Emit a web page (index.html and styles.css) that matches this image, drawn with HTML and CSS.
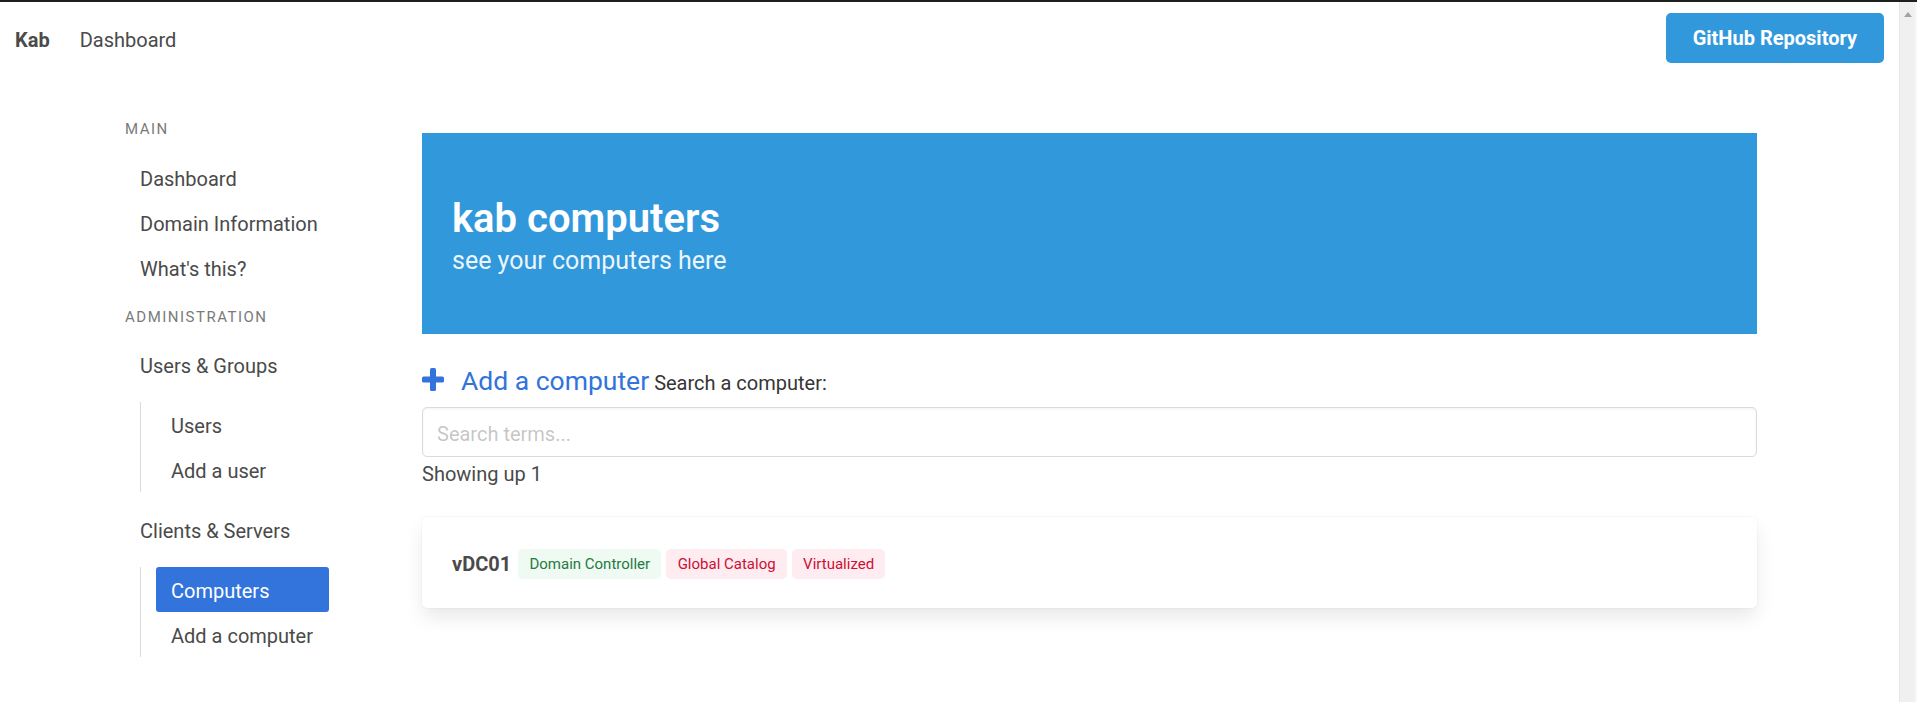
FILE: index.html
```html
<!DOCTYPE html>
<html lang="en">
<head>
<meta charset="utf-8">
<title>Kab - Computers</title>
<link rel="stylesheet" href="styles.css">
</head>
<body>
<div class="window">
  <div class="page">
    <nav class="navbar">
      <div class="navbar-start">
        <a class="navbar-item text-item brand">Kab</a>
        <a class="navbar-item text-item">Dashboard</a>
      </div>
      <div class="navbar-end">
        <div class="navbar-item"><a class="button">GitHub Repository</a></div>
      </div>
    </nav>
    <div class="layout">
      <aside class="menu">
        <p class="menu-label">Main</p>
        <ul class="menu-list">
          <li><a>Dashboard</a></li>
          <li><a>Domain Information</a></li>
          <li><a>What's this?</a></li>
        </ul>
        <p class="menu-label second">Administration</p>
        <ul class="menu-list">
          <li>
            <a>Users &amp; Groups</a>
            <ul class="sub-list">
              <li><a>Users</a></li>
              <li><a>Add a user</a></li>
            </ul>
          </li>
          <li>
            <a>Clients &amp; Servers</a>
            <ul class="sub-list">
              <li><a class="is-active">Computers</a></li>
              <li><a>Add a computer</a></li>
            </ul>
          </li>
        </ul>
      </aside>
      <main class="content">
        <section class="hero">
          <h1 class="title">kab computers</h1>
          <h2 class="subtitle">see your computers here</h2>
        </section>
        <div class="add-row">
          <a class="add-link"><svg class="plus" viewBox="0 0 22 23" width="22" height="23" aria-hidden="true"><rect x="8" y="0" width="6" height="23" rx="1.6" fill="#3273dc"/><rect x="0" y="8.5" width="22" height="6" rx="1.6" fill="#3273dc"/></svg>Add a computer</a>
          <label class="search-label">Search a computer:</label>
        </div>
        <input class="input" type="text" placeholder="Search terms...">
        <p class="showing">Showing up 1</p>
        <div class="card">
          <div class="card-content">
            <strong class="host">vDC01</strong>
            <span class="tag is-success">Domain Controller</span>
            <span class="tag is-danger">Global Catalog</span>
            <span class="tag is-danger">Virtualized</span>
          </div>
        </div>
      </main>
    </div>
  </div>
  <div class="scrollbar"><span class="arrow"></span></div>
</div>
</body>
</html>
```
FILE: styles.css
```css
* { box-sizing: border-box; }

html, body {
  margin: 0;
  padding: 0;
  overflow: hidden;
}

body {
  font-family: Roboto, "Segoe UI", "Liberation Sans", sans-serif;
  font-size: 20px;
  line-height: 1.5;
  color: #4a4a4a;
  background: #fff;
}

.window {
  display: flex;
  height: 100vh;
  border-top: 2px solid #1f1f1f;
}

.page {
  flex: 1;
  min-width: 0;
}

/* Navbar */
.navbar {
  display: flex;
  justify-content: space-between;
  height: 72px;
}

.navbar-start,
.navbar-end {
  display: flex;
}

.navbar-item {
  display: flex;
  align-items: center;
  padding: 10px 15px;
  line-height: 30px;
  color: #4a4a4a;
}

.navbar-item.text-item {
  padding-top: 12px;
  padding-bottom: 8px;
}

.brand {
  font-weight: 700;
}

.button {
  display: inline-flex;
  align-items: center;
  height: 50px;
  padding: 0 26px;
  border: 1px solid transparent;
  border-radius: 5px;
  background: #3298dc;
  color: #fff;
  font-weight: 700;
  font-size: 20px;
}

/* Layout */
.layout {
  display: grid;
  grid-template-columns: 219px 1335px;
  column-gap: 78px;
  padding-left: 125px;
}

/* Menu */
.menu {
  padding-top: 43px;
}

.menu-label {
  margin: 0 0 14px;
  padding-top: 1px;
  font-size: 15px;
  line-height: 22.5px;
  letter-spacing: 1.5px;
  text-transform: uppercase;
  color: #7a7a7a;
}

.menu-label.second {
  margin-top: 15px;
}

.menu-list,
.sub-list {
  list-style: none;
  margin: 0;
  padding: 0;
  line-height: 25px;
}

.menu-list a {
  display: block;
  padding: 12px 15px 8px;
  border-radius: 3px;
  color: #4a4a4a;
}

.sub-list {
  margin: 15px;
  padding-left: 15px;
  border-left: 1px solid #dbdbdb;
}

.menu-list a.is-active {
  background: #3273dc;
  color: #fff;
}

/* Content */
.content {
  padding-top: 59px;
}

.hero {
  background: #3298dc;
  padding: 63px 30px 57px;
  height: 201px;
}

.title {
  margin: 0;
  font-size: 40px;
  line-height: 45px;
  font-weight: 600;
  color: #fff;
}

.subtitle {
  margin: 4px 0 0;
  font-size: 25px;
  line-height: 31px;
  font-weight: 400;
  color: rgba(255, 255, 255, 0.92);
}

.add-row {
  margin-top: 24px;
  height: 45px;
  line-height: 45px;
  margin-bottom: 4px;
  white-space: nowrap;
}

.add-link {
  font-size: 26.5px;
  color: #3273dc;
}

.plus {
  vertical-align: -1px;
  margin-right: 17px;
}

.search-label {
  font-size: 20px;
  color: #363636;
}

.input {
  display: block;
  width: 100%;
  height: 50px;
  padding: 4px 14px 0;
  border: 1px solid #dbdbdb;
  border-radius: 5px;
  box-shadow: inset 0 1.25px 2.5px rgba(10, 10, 10, 0.05);
  font-family: inherit;
  font-size: 20px;
  color: #363636;
  background: #fff;
}

.input::placeholder {
  color: rgba(54, 54, 54, 0.3);
}

.showing {
  margin: 0;
  padding-top: 2px;
  line-height: 30px;
}

.card {
  margin-top: 28px;
  background: #fff;
  border-radius: 5px;
  box-shadow: 0 10px 20px -2.5px rgba(10, 10, 10, 0.1), 0 0 0 1px rgba(10, 10, 10, 0.02);
}

.card-content {
  display: flex;
  align-items: center;
  gap: 5px;
  height: 91px;
  padding: 3px 30px 0;
}

.host {
  font-weight: 700;
  color: #4a4a4a;
  margin-right: 2px;
}

.tag {
  display: inline-flex;
  align-items: center;
  height: 30px;
  padding: 0 11.25px;
  border-radius: 5px;
  font-size: 15px;
  white-space: nowrap;
}

.tag.is-success {
  background: #effaf3;
  color: #257942;
}

.tag.is-danger {
  background: #feecf0;
  color: #cc0f35;
}

/* Fake classic scrollbar */
.scrollbar {
  width: 18px;
  flex: none;
  background: #f0f0f0;
  border-left: 1px solid #e8e8e8;
  border-right: 2px solid #f8f8f8;
  display: flex;
  justify-content: center;
  padding-top: 10px;
}

.arrow {
  width: 0;
  height: 0;
  border-left: 4px solid transparent;
  border-right: 4px solid transparent;
  border-bottom: 5px solid #a3a3a3;
}
```
